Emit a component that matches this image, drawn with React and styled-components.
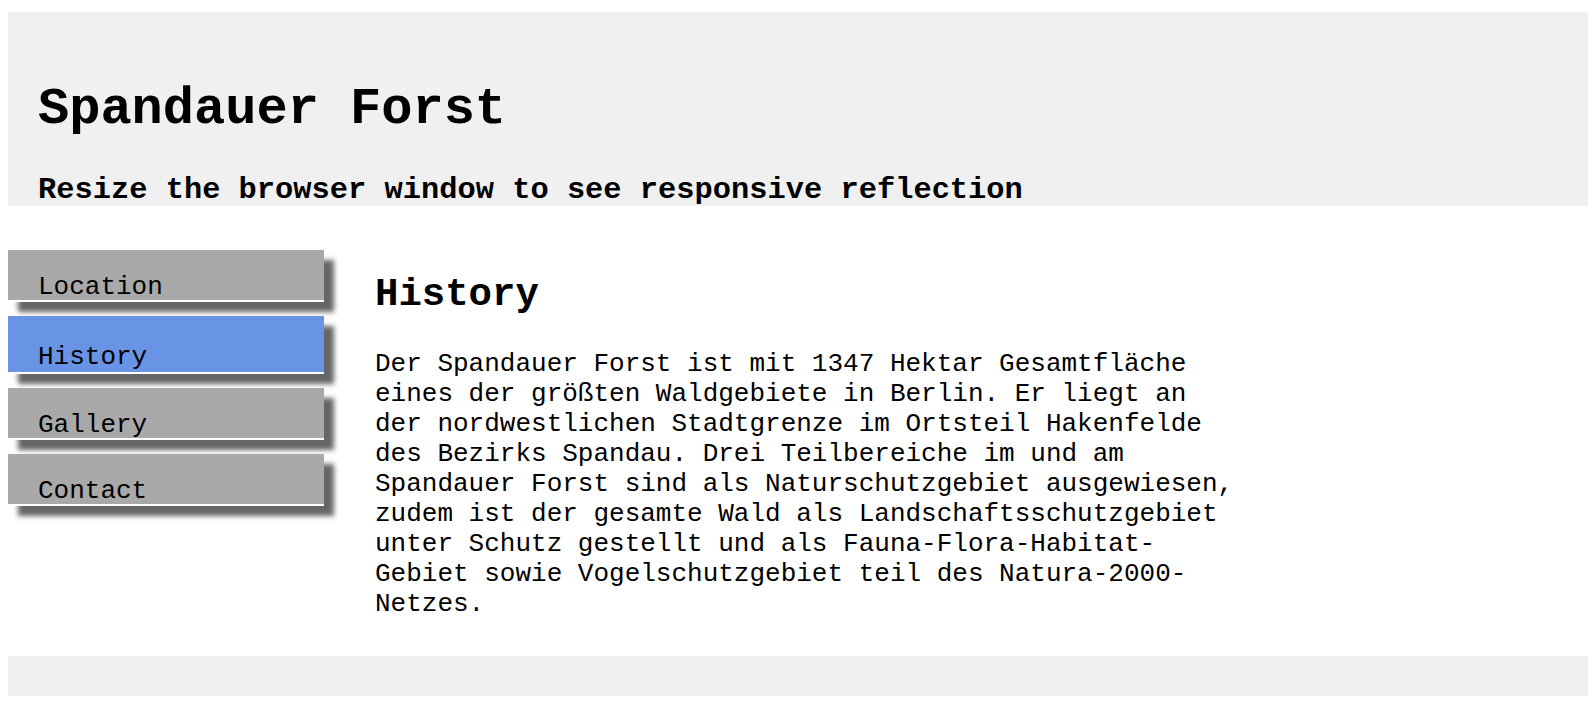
import React from "react";
import styled, { createGlobalStyle } from "styled-components";

const GlobalStyle = createGlobalStyle`
  * { box-sizing: border-box; }
  html, body { margin: 0; padding: 0; background: #ffffff; }
  body {
    font-family: "Courier New", "Liberation Mono", "DejaVu Sans Mono", monospace;
    font-size: 26px;
    color: #000000;
  }
`;

const Page = styled.div`
  padding: 12px 4px 8px 8px;
`;

const Header = styled.header`
  background: #f0f0f0;
  padding: 68px 30px 0;
  height: 194px;
`;

const Title = styled.h1`
  margin: 0 0 34px;
  font-size: 52px;
  font-weight: bold;
  line-height: normal;
`;

const Subtitle = styled.h3`
  margin: 0;
  font-size: 30.4px;
  font-weight: bold;
  line-height: normal;
`;

const Main = styled.main`
  display: flex;
  align-items: flex-start;
  gap: 51px;
  padding: 44px 0 0;
`;

const Menu = styled.ul`
  list-style: none;
  margin: 0;
  padding: 0;
  width: 316px;
  flex: none;
  display: flex;
  flex-direction: column;
  gap: 14px;
`;

const MenuItem = styled.li`
  height: ${(p) => (p.$active ? "58px" : "52px")};
  padding: ${(p) => (p.$active ? "26px" : "22px")} 30px 0;
  background: ${(p) => (p.$active ? "#6994e6" : "#a9a9a9")};
  border-bottom: 2px solid #ffffff;
  box-shadow: 10px 10px 5px #666666;
  line-height: normal;
  white-space: nowrap;
`;

const Content = styled.section`
  padding-top: 23px;
`;

const SectionTitle = styled.h2`
  margin: 0 0 32px;
  font-size: 39px;
  font-weight: bold;
  line-height: normal;
`;

const Text = styled.p`
  margin: 0;
  width: 866px;
  line-height: normal;
`;

const Footer = styled.footer`
  margin-top: 37px;
  height: 40px;
  background: #f0f0f0;
`;

const items = ["Location", "History", "Gallery", "Contact"];

export default function App() {
  return (
    <>
      <GlobalStyle />
      <Page>
        <Header>
          <Title>Spandauer Forst</Title>
          <Subtitle>Resize the browser window to see responsive reflection</Subtitle>
        </Header>
        <Main>
          <Menu>
            {items.map((it) => (
              <MenuItem key={it} $active={it === "History"}>
                {it}
              </MenuItem>
            ))}
          </Menu>
          <Content>
            <SectionTitle>History</SectionTitle>
            <Text>
              Der Spandauer Forst ist mit 1347 Hektar Gesamtfläche eines der
              größten Waldgebiete in Berlin. Er liegt an der nordwestlichen
              Stadtgrenze im Ortsteil Hakenfelde des Bezirks Spandau. Drei
              Teilbereiche im und am Spandauer Forst sind als Naturschutzgebiet
              ausgewiesen, zudem ist der gesamte Wald als
              Landschaftsschutzgebiet unter Schutz gestellt und als
              Fauna-Flora-Habitat-Gebiet sowie Vogelschutzgebiet teil des
              Natura-2000-Netzes.
            </Text>
          </Content>
        </Main>
        <Footer />
      </Page>
    </>
  );
}
